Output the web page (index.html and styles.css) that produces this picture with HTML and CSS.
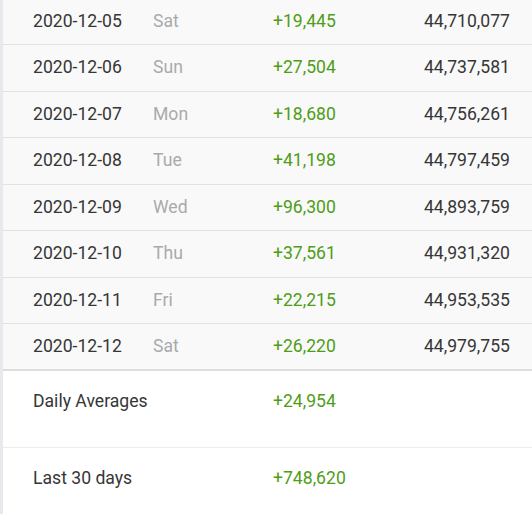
FILE: index.html
```html
<!DOCTYPE html>
<html lang="en">
<head>
<meta charset="utf-8">
<title>Daily history</title>
<link rel="stylesheet" href="styles.css">
</head>
<body>
<div class="panel">
  <div class="row"><span class="date">2020-12-05</span><span class="day">Sat</span><span class="change">+19,445</span><span class="total">44,710,077</span></div>
  <div class="row"><span class="date">2020-12-06</span><span class="day">Sun</span><span class="change">+27,504</span><span class="total">44,737,581</span></div>
  <div class="row"><span class="date">2020-12-07</span><span class="day">Mon</span><span class="change">+18,680</span><span class="total">44,756,261</span></div>
  <div class="row"><span class="date">2020-12-08</span><span class="day">Tue</span><span class="change">+41,198</span><span class="total">44,797,459</span></div>
  <div class="row"><span class="date">2020-12-09</span><span class="day">Wed</span><span class="change">+96,300</span><span class="total">44,893,759</span></div>
  <div class="row"><span class="date">2020-12-10</span><span class="day">Thu</span><span class="change">+37,561</span><span class="total">44,931,320</span></div>
  <div class="row"><span class="date">2020-12-11</span><span class="day">Fri</span><span class="change">+22,215</span><span class="total">44,953,535</span></div>
  <div class="row last"><span class="date">2020-12-12</span><span class="day">Sat</span><span class="change">+26,220</span><span class="total">44,979,755</span></div>
  <div class="row foot"><span class="label">Daily Averages</span><span class="change">+24,954</span><span class="total"></span></div>
  <div class="row foot"><span class="label">Last 30 days</span><span class="change">+748,620</span><span class="total"></span></div>
</div>
</body>
</html>
```

FILE: styles.css
```css
html, body {
  margin: 0;
  padding: 0;
  background: #ffffff;
}

body {
  font-family: Roboto, "Liberation Sans", sans-serif;
  font-size: 17.6px;
  color: #363636;
  overflow: hidden;
}

.panel {
  border-left: 3px solid #e8e9ec;
  margin-top: -1.5px;
  min-height: 520px;
}

.row {
  box-sizing: border-box;
  display: grid;
  grid-template-columns: 120px 120px 120px 1fr;
  align-items: center;
  height: 46.5px;
  padding: 0 22px 0 30px;
  background: #f9f9f9;
  border-bottom: 1px solid #e2e2e2;
  line-height: 21px;
}

.row.last {
  height: 47px;
  border-bottom: 2px solid #dedede;
}

.row.foot {
  height: 76.5px;
  align-items: start;
  padding-top: 20px;
  background: #ffffff;
  border-bottom: 1px solid #ececec;
}

.label {
  grid-column: span 2;
}

.day {
  color: #aaaaaa;
}

.change {
  color: #4f9d17;
}

.total {
  text-align: right;
  color: #363636;
}
```
